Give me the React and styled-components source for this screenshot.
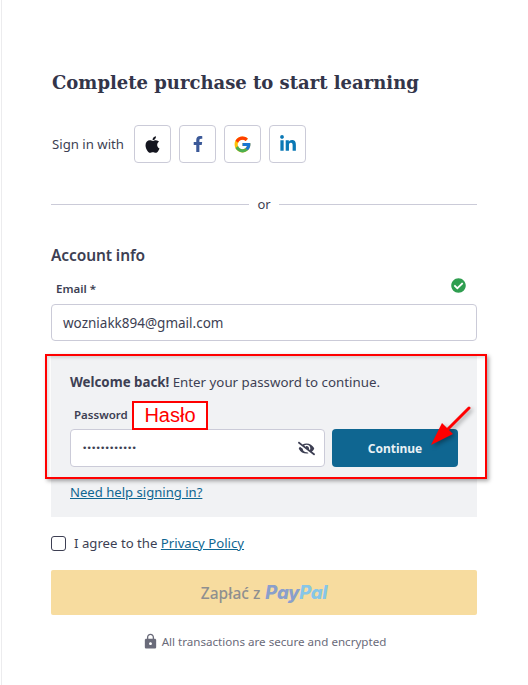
import styled, { createGlobalStyle } from "styled-components"
import { FaApple, FaFacebookF, FaLinkedinIn, FaCheckCircle, FaEyeSlash } from "react-icons/fa"
import { FcGoogle } from "react-icons/fc"
import { MdLock } from "react-icons/md"

const Global = createGlobalStyle`
  body {
    margin: 0;
    background: #fff;
    font-family: "Noto Sans", "Liberation Sans", sans-serif;
    color: #3d3f53;
  }
`

const Page = styled.div`
  position: relative;
  width: 528px;
  height: 685px;
  box-sizing: border-box;
  overflow: hidden;
`

const Column = styled.main`
  width: 426px;
  height: 685px;
  margin-left: 1px;
  padding: 69px 0 0 49px;
  border-left: 1px solid #ececee;
`

const Title = styled.h1`
  margin: 0 0 0 1px;
  height: 28px;
  font-family: "DejaVu Serif", "Liberation Serif", serif;
  font-size: 18px;
  line-height: 28px;
  font-weight: 700;
  color: #33354a;
  white-space: nowrap;
`

const SocialRow = styled.div`
  display: flex;
  align-items: center;
  margin-top: 28px;
`

const SocialLabel = styled.span`
  font-size: 13.2px;
  margin: 0 10px 0 1px;
  width: 72px;
  white-space: nowrap;
`

const SocialButton = styled.button`
  display: flex;
  align-items: center;
  justify-content: center;
  width: 37px;
  height: 38px;
  padding: 0;
  margin-right: 8px;
  background: #fff;
  border: 1px solid #cbcbd8;
  border-radius: 4px;
  color: ${(p) => p.$color};
  font-size: 17px;
`

const Divider = styled.div`
  display: flex;
  align-items: center;
  margin-top: 29px;
  height: 24px;
  gap: 8px;
  font-size: 13px;
  &::before,
  &::after {
    content: "";
    flex: 1;
    height: 1px;
    background: #cbcbd8;
  }
`

const SectionTitle = styled.h2`
  margin: 27px 0 0;
  font-size: 15.5px;
  line-height: 24px;
  font-weight: 600;
  letter-spacing: -0.1px;
`

const EmailLabelRow = styled.div`
  display: flex;
  justify-content: space-between;
  align-items: center;
  padding: 0 11px 0 5px;
  margin-top: 8px;
  height: 26px;
`

const SmallLabel = styled.label`
  font-size: 11.5px;
  font-weight: 600;
  color: #3d3f53;
  white-space: nowrap;
`

const CheckIcon = styled(FaCheckCircle)`
  color: #2f9e50;
  font-size: 15px;
  margin-top: -5px;
`

const Field = styled.div`
  display: flex;
  align-items: center;
  justify-content: space-between;
  box-sizing: border-box;
  height: ${(p) => p.$height || 37}px;
  width: ${(p) => p.$width || "auto"};
  flex: ${(p) => (p.$width ? "none" : 1)};
  margin-top: 3px;
  padding: 0 9px 0 11px;
  background: #fff;
  border: 1px solid #cbcbd8;
  border-radius: 4px;
  font-size: 13.5px;
`

const Panel = styled.section`
  margin-top: 13px;
  height: 163px;
  box-sizing: border-box;
  padding: 17px 19px 0;
  background: #f1f2f4;
`

const Welcome = styled.p`
  margin: 0;
  font-size: 13.3px;
  line-height: 22px;
  white-space: nowrap;
  b {
    font-weight: 700;
  }
`

const PasswordLabel = styled(SmallLabel)`
  display: block;
  margin: 13px 0 0 4px;
  line-height: 18px;
`

const PasswordRow = styled.div`
  display: flex;
  gap: 7px;
  margin-top: 2px;
`

const Dots = styled.span`
  font-size: 9px;
  letter-spacing: -0.8px;
  font-family: "DejaVu Sans", sans-serif;
`

const Continue = styled.button`
  width: 126px;
  height: 38px;
  margin-top: 3px;
  border: none;
  border-radius: 4px;
  background: #0f6691;
  color: #e9f1f5;
  font-family: inherit;
  font-size: 12px;
  font-weight: 700;
  padding: 0;
`

const HelpLink = styled.a`
  display: block;
  margin-top: 15px;
  font-size: 13.1px;
  line-height: 20px;
  color: #0f6691;
  text-decoration: underline;
`

const AgreeRow = styled.div`
  display: flex;
  align-items: center;
  margin-top: 16px;
  height: 20px;
  font-size: 13.2px;
  gap: 8px;
  a {
    color: #0f6691;
    text-decoration: underline;
  }
`

const Box = styled.span`
  width: 13px;
  height: 13px;
  border: 1.5px solid #3d3f53;
  border-radius: 3px;
`

const PayButton = styled.button`
  display: flex;
  align-items: center;
  justify-content: center;
  gap: 5px;
  width: 426px;
  height: 45px;
  margin-top: 17px;
  border: none;
  border-radius: 2px;
  background: #f7dc9f;
  color: #8f8f8f;
  font-family: inherit;
  font-size: 15.5px;
  font-weight: 500;
`

const PayBrand = styled.span`
  font-family: "Inter", sans-serif;
  font-size: 18.5px;
  font-weight: 800;
  font-style: italic;
  color: ${(p) => p.$color};
  letter-spacing: -0.3px;
`

const Secure = styled.div`
  display: flex;
  align-items: center;
  justify-content: center;
  gap: 3px;
  margin-top: 18px;
  font-size: 11.6px;
  color: #6a6b7a;
  svg {
    font-size: 17px;
  }
`

const RedBox = styled.div`
  position: absolute;
  left: 45px;
  top: 354px;
  width: 442px;
  height: 125px;
  box-sizing: border-box;
  border: 2px solid #f00;
  box-shadow: 2px 2px 4px rgba(0, 0, 0, 0.35), inset 2px 2px 3px rgba(0, 0, 0, 0.12);
`

const HasloTag = styled.div`
  position: absolute;
  left: 132px;
  top: 401px;
  width: 76px;
  height: 29px;
  box-sizing: border-box;
  border: 2px solid #f00;
  background: #fff;
  color: #f00;
  font-family: "Liberation Sans", sans-serif;
  font-size: 20px;
  line-height: 25px;
  text-align: center;
`

const Arrow = styled.svg`
  position: absolute;
  left: 425px;
  top: 402px;
  filter: drop-shadow(2px 2px 2px rgba(0, 0, 0, 0.35));
`

export default function App() {
  return (
    <Page>
      <Global />
      <Column>
        <Title>Complete purchase to start learning</Title>
        <SocialRow>
          <SocialLabel>Sign in with</SocialLabel>
          <SocialButton $color="#14151f"><FaApple size={19} /></SocialButton>
          <SocialButton $color="#3b5998"><FaFacebookF size={16} /></SocialButton>
          <SocialButton><FcGoogle size={19} /></SocialButton>
          <SocialButton $color="#0a78b5"><FaLinkedinIn size={18} /></SocialButton>
        </SocialRow>
        <Divider>or</Divider>
        <SectionTitle>Account info</SectionTitle>
        <EmailLabelRow>
          <SmallLabel>Email *</SmallLabel>
          <CheckIcon />
        </EmailLabelRow>
        <Field>wozniakk894@gmail.com</Field>
        <Panel>
          <Welcome><b>Welcome back!</b> Enter your password to continue.</Welcome>
          <PasswordLabel>Password</PasswordLabel>
          <PasswordRow>
            <Field $height={38} $width="255px">
              <Dots>••••••••••••</Dots>
              <FaEyeSlash size={17} />
            </Field>
            <Continue>Continue</Continue>
          </PasswordRow>
          <HelpLink>Need help signing in?</HelpLink>
        </Panel>
        <AgreeRow>
          <Box />
          <span>I agree to the <a>Privacy Policy</a></span>
        </AgreeRow>
        <PayButton>
          Zapłać z
          <span>
            <PayBrand $color="#8a9fcb">Pay</PayBrand>
            <PayBrand $color="#86c6e8">Pal</PayBrand>
          </span>
        </PayButton>
        <Secure>
          <MdLock />
          All transactions are secure and encrypted
        </Secure>
      </Column>
      <RedBox />
      <HasloTag>Hasło</HasloTag>
      <Arrow width="50" height="50" viewBox="0 0 50 50">
        <path d="M44 6 L21 29" stroke="#f00" strokeWidth="3" strokeLinecap="round" fill="none" />
        <path d="M6 43 L17 21 L28 32 Z" fill="#f00" />
      </Arrow>
    </Page>
  )
}
